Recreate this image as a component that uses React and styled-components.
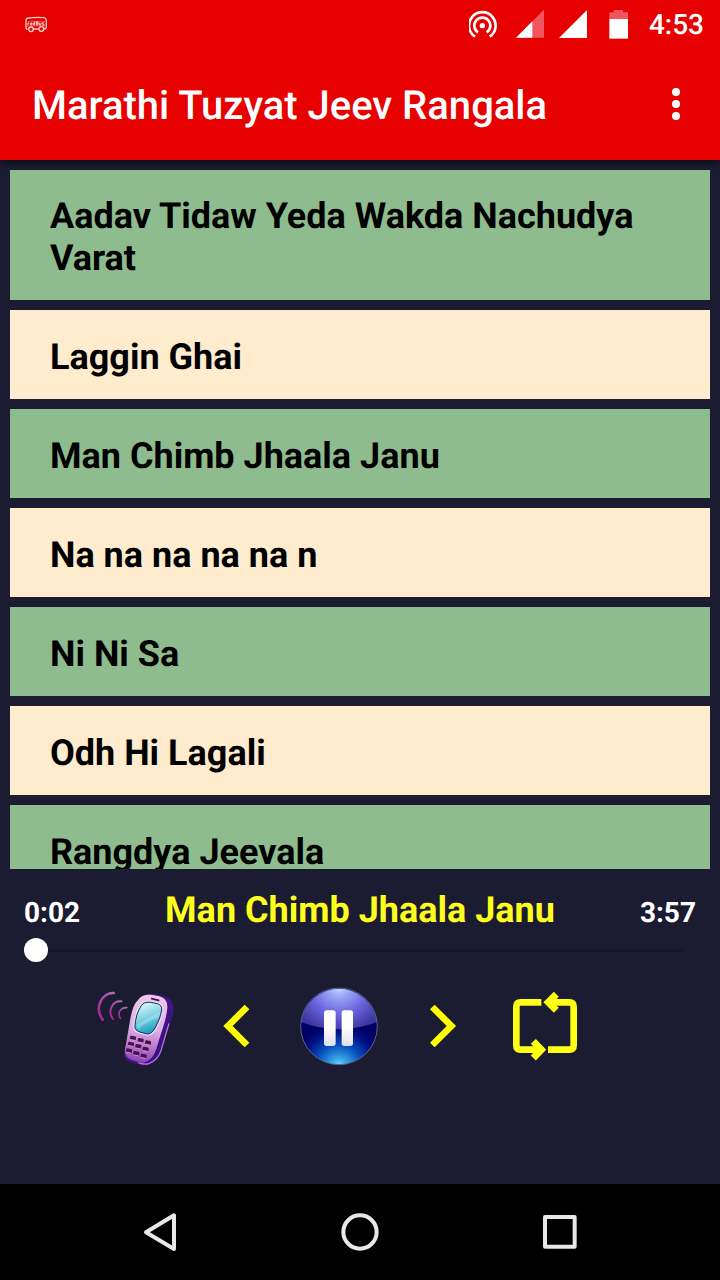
import React, { useState } from "react";
import styled, { createGlobalStyle } from "styled-components";

const GlobalStyle = createGlobalStyle`
  *, *::before, *::after { box-sizing: border-box; }
  body { margin: 0; background: #1b1b31; font-family: Roboto, "Liberation Sans", sans-serif; text-rendering: geometricPrecision; }
  button { margin: 0; padding: 0; border: 0; background: none; font: inherit; text-rendering: inherit; cursor: pointer; }
`;

const Screen = styled.div`
  display: flex;
  flex-direction: column;
  height: 100vh;
  background: #1b1b31;
`;

const Header = styled.header`
  flex: none;
  position: relative;
  background: #e60000;
  color: #fff;
  box-shadow: 0 2px 6px rgba(0, 10, 15, 0.7);
`;

const StatusBar = styled.div`
  display: flex;
  align-items: center;
  justify-content: space-between;
  height: 50px;
  padding: 0 16px 0 24px;
`;

const StatusIcons = styled.div`
  display: flex;
  align-items: center;
  gap: 15px;
`;

const Clock = styled.time`
  font-size: 28px;
  font-weight: 500;
  line-height: 32px;
`;

const AppBar = styled.div`
  display: flex;
  align-items: center;
  justify-content: space-between;
  height: 110px;
  padding: 0 20px 0 32px;
`;

const AppTitle = styled.h1`
  margin: 0;
  padding-top: 2px;
  font-size: 40px;
  font-weight: 500;
  line-height: 48px;
`;

const IconButton = styled.button`
  display: flex;
  align-items: center;
  justify-content: center;
  flex: none;
  width: ${({ $size }) => $size}px;
  height: ${({ $size }) => $size}px;
`;

const Icon = styled.svg`
  display: block;
  flex: none;
  width: ${({ $size }) => $size}px;
  height: ${({ $size }) => $size}px;
`;

const SongList = styled.ul`
  flex: 1;
  min-height: 0;
  display: flex;
  flex-direction: column;
  gap: 10px;
  margin: 0;
  padding: 10px 10px 0;
  list-style: none;
  overflow-y: auto;
  scrollbar-width: none;
`;

const SongItem = styled.li`
  flex: none;
`;

const SongButton = styled.button`
  && {
    display: flex;
    align-items: center;
    width: 100%;
    min-height: 89px;
    padding: 25px 40px 21px;
    background: ${({ $shade }) => ($shade ? "#8fbc8f" : "#ffebcd")};
    color: #000;
    font-size: 36px;
    font-weight: 700;
    line-height: 42px;
    text-align: left;
  }
`;

const Player = styled.section`
  flex: none;
  padding: 20px 24px 118px;
`;

const NowPlaying = styled.div`
  display: flex;
  align-items: baseline;
  justify-content: space-between;
`;

const TrackTime = styled.span`
  color: #fff;
  font-size: 28px;
  font-weight: 700;
  line-height: 42px;
`;

const TrackTitle = styled.h2`
  margin: 0;
  color: #ffff1e;
  font-size: 36px;
  font-weight: 700;
  line-height: 42px;
`;

const SeekBar = styled.input`
  display: block;
  width: 100%;
  height: 24px;
  margin: 4px 0 24px;
  appearance: none;
  background: linear-gradient(#17172a, #17172a) center / calc(100% - 24px) 3px no-repeat;

  &::-webkit-slider-thumb {
    appearance: none;
    width: 24px;
    height: 24px;
    border: 0;
    border-radius: 50%;
    background: #fff;
  }
`;

const Controls = styled.div`
  display: flex;
  justify-content: center;
  gap: 22px;
  padding-right: 40px;
`;

const SystemNav = styled.nav`
  flex: none;
  display: flex;
  align-items: center;
  justify-content: center;
  gap: 160px;
  height: 96px;
  background: #000;
`;

const BusIcon = () => (
  <Icon $size={24} viewBox="72 39 72 72" fill="none" stroke="#ffd0c8" strokeWidth="4" aria-hidden="true">
    <path d="M83 88q-5 0-5-6V61q0-6 7-7 23-3 47-1 6 1 7 7v20q0 7-7 7h-1M101 87h16" />
    <circle cx="93" cy="88" r="7" />
    <circle cx="124" cy="87" r="7" />
    <path d="M80 64h56M80 78h56" strokeWidth="2" opacity=".5" />
    <path d="M84 76v-7h4M91 72h5v-3h-4v6h5M100 75v-6h4v6h-5M104 69v-5M109 65v10h5v-10zM109 70h5M118 68v7h5v-7M132 68h-5v4h5v4h-5" strokeWidth="3" />
  </Icon>
);

const HotspotIcon = () => (
  <Icon $size={30} viewBox="57 30 90 90" fill="none" stroke="#fff" aria-hidden="true">
    <circle cx="97" cy="77" r="8" fill="#fff" stroke="none" />
    <path d="M84 97a24 24 0 1 1 26 0" strokeWidth="8" />
    <path d="M75 110a40 40 0 1 1 44 0" strokeWidth="8" />
  </Icon>
);

const WeakSignalIcon = () => (
  <Icon $size={30} viewBox="192 30 90 90" aria-hidden="true">
    <path d="M282 29v84h-84z" fill="#f3555f" />
    <path d="M247 64v49h-49z" fill="#fff" />
  </Icon>
);

const SignalIcon = () => (
  <Icon $size={30} viewBox="327 30 90 90" aria-hidden="true">
    <path d="M411 30v84h-84z" fill="#fff" />
  </Icon>
);

const BatteryIcon = () => (
  <Icon $size={30} viewBox="462 30 90 90" aria-hidden="true">
    <path d="M478 37h13v-7h28v7h15v21h-56z" fill="#f3555f" />
    <path d="M478 57h56v59h-56z" fill="#fff" />
  </Icon>
);

const MoreIcon = () => (
  <Icon $size={48} viewBox="0 1 48 48" fill="#fff" aria-hidden="true">
    <circle cx="24" cy="12" r="4" />
    <circle cx="24" cy="24" r="4" />
    <circle cx="24" cy="36" r="4" />
  </Icon>
);

const KEYS = [
  [162, 204], [185, 211], [207, 218],
  [156, 222], [178, 229], [200, 237],
  [150, 242], [172, 250], [194, 258],
];

const RingtoneIcon = () => (
  <Icon $size={80} viewBox="51 48 240 240" aria-hidden="true">
    <defs>
      <linearGradient id="caseSide" x1="0" y1="0" x2="1" y2="1">
        <stop offset="0" stopColor="#b987d6" />
        <stop offset=".35" stopColor="#4b1590" />
        <stop offset=".75" stopColor="#38127e" />
        <stop offset="1" stopColor="#b66ae0" />
      </linearGradient>
      <linearGradient id="caseFront" x1=".5" y1="0" x2=".4" y2="1">
        <stop offset="0" stopColor="#f3c7ea" />
        <stop offset=".5" stopColor="#dcaee6" />
        <stop offset=".75" stopColor="#bd78c9" />
        <stop offset="1" stopColor="#8745b5" />
      </linearGradient>
      <linearGradient id="glass" x1=".2" y1="0" x2=".5" y2="1">
        <stop offset="0" stopColor="#e3fbfb" />
        <stop offset=".5" stopColor="#7fd3e4" />
        <stop offset="1" stopColor="#159bc0" />
      </linearGradient>
      <linearGradient id="waves" x1="1" y1="0" x2="0" y2="1">
        <stop offset="0" stopColor="#a970bd" />
        <stop offset="1" stopColor="#a0208c" />
      </linearGradient>
    </defs>
    <g fill="none" stroke="url(#waves)" strokeLinecap="round">
      <path d="M104 69C72 67 43 111 71 149" strokeWidth="8" />
      <path d="M127 94C102 91 83 122 102 147" strokeWidth="6" />
      <path d="M143 113C128 111 112 128 124 145" strokeWidth="5" />
    </g>
    <path d="M180 86Q194 70 226 73L250 78Q281 84 284 112Q284 133 272 163L247 244Q237 276 208 286Q194 289 174 283L149 274Q132 265 137 239Z" fill="url(#caseSide)" />
    <path d="M270 160L246 242Q237 270 209 281Q196 285 178 278" fill="none" stroke="#b576de" strokeWidth="4" />
    <path d="M177 90Q190 72 220 75L241 79Q266 86 265 112Q264 133 255 163L231 239Q221 271 194 278Q183 279 161 271Q135 262 138 238L155 141Q162 104 177 90Z" fill="url(#caseFront)" />
    <path d="M182 103Q192 89 216 92L237 97Q256 103 253 121Q249 147 235 175Q224 196 207 197L184 192Q160 186 162 168Q165 129 182 103Z" fill="#e6d5fa" />
    <path d="M187 107Q194 95 214 97L235 101Q250 106 248 120Q245 143 230 171Q220 191 206 192L186 187Q166 182 168 168Q170 132 187 107Z" fill="url(#glass)" stroke="#15354f" strokeWidth="3" />
    <path d="M173 165Q210 141 245 125L239 144Q208 149 178 176Z" fill="#fff" opacity=".25" />
    <path d="M218 86l21 5" stroke="#3c174b" strokeWidth="5" strokeLinecap="round" />
    {KEYS.map(([x, y]) => (
      <g key={`${x}-${y}`} transform={`translate(${x} ${y}) rotate(10)`}>
        <rect x="-9" y="-6" width="18" height="12" rx="3" fill="#461151" />
        <path d="M-8 6h15" stroke="#f0b3e4" strokeWidth="2" />
      </g>
    ))}
  </Icon>
);

const PreviousIcon = () => (
  <Icon $size={80} viewBox="-6 48 240 240" fill="none" stroke="#ffff00" strokeWidth="20" aria-hidden="true">
    <path d="M141 111L84 168l57 57" />
  </Icon>
);

const NextIcon = () => (
  <Icon $size={80} viewBox="606 48 240 240" fill="none" stroke="#ffff00" strokeWidth="20" aria-hidden="true">
    <path d="M697 111l57 57-57 57" />
  </Icon>
);

const PauseIcon = () => (
  <Icon $size={80} viewBox="300 48 240 240" aria-hidden="true">
    <defs>
      <radialGradient id="orbBase" gradientUnits="userSpaceOnUse" cx="417" cy="292" r="135">
        <stop offset="0" stopColor="#80e6ff" />
        <stop offset=".2" stopColor="#3aa4e8" />
        <stop offset=".5" stopColor="#0650bd" />
        <stop offset=".8" stopColor="#020f83" />
        <stop offset="1" stopColor="#020064" />
      </radialGradient>
      <radialGradient id="orbGloss" gradientUnits="userSpaceOnUse" cx="417" cy="46" r="145">
        <stop offset="0" stopColor="#c2eaff" />
        <stop offset=".25" stopColor="#9ba5f5" />
        <stop offset=".6" stopColor="#6b64df" />
        <stop offset="1" stopColor="#3c36a0" />
      </radialGradient>
      <linearGradient id="pauseBars" x1="0" y1="0" x2="0" y2="1">
        <stop offset="0" stopColor="#fff" />
        <stop offset=".5" stopColor="#fff" />
        <stop offset="1" stopColor="#dedeea" />
      </linearGradient>
    </defs>
    <circle cx="417" cy="169" r="115" fill="url(#orbBase)" />
    <path d="M303 156A115 115 0 0 1 531 156Q417 200 303 156Z" fill="url(#orbGloss)" />
    <circle cx="417" cy="169" r="115" fill="none" stroke="#596587" strokeWidth="3" />
    <rect x="372" y="121" width="35" height="107" rx="8" fill="url(#pauseBars)" />
    <rect x="425" y="121" width="34" height="107" rx="8" fill="url(#pauseBars)" />
  </Icon>
);

const RepeatIcon = () => (
  <Icon $size={80} viewBox="42 48 240 240" fill="none" stroke="#ffff14" strokeWidth="20" aria-hidden="true">
    <path d="M154 97H92Q79 97 79 110V226Q79 239 92 239H140" />
    <path d="M174 239H238Q251 239 251 226V110Q251 97 238 97H184" />
    <path d="M199 73L175 97l24 24" strokeWidth="21" />
    <path d="M130 214l24 25-24 25" strokeWidth="21" />
  </Icon>
);

const BackIcon = () => (
  <Icon $size={40} viewBox="60 66 120 120" fill="none" stroke="#e8e8e8" strokeWidth="12" strokeLinejoin="round" aria-hidden="true">
    <path d="M162 76v101L78 127z" />
  </Icon>
);

const HomeIcon = () => (
  <Icon $size={40} viewBox="660 66 120 120" fill="none" stroke="#e8e8e8" strokeWidth="12" aria-hidden="true">
    <circle cx="720" cy="126" r="50" />
  </Icon>
);

const RecentsIcon = () => (
  <Icon $size={40} viewBox="1260 66 120 120" fill="none" stroke="#e8e8e8" strokeWidth="12" strokeLinejoin="round" aria-hidden="true">
    <rect x="1275" y="81" width="89" height="89" />
  </Icon>
);

const SONGS = [
  "Aadav Tidaw Yeda Wakda Nachudya Varat",
  "Laggin Ghai",
  "Man Chimb Jhaala Janu",
  "Na na na na na n",
  "Ni Ni Sa",
  "Odh Hi Lagali",
  "Rangdya Jeevala",
];

export default function App() {
  const [position, setPosition] = useState(0);

  return (
    <Screen>
      <GlobalStyle />
      <Header>
        <StatusBar>
          <BusIcon />
          <StatusIcons>
            <HotspotIcon />
            <WeakSignalIcon />
            <SignalIcon />
            <BatteryIcon />
            <Clock>4:53</Clock>
          </StatusIcons>
        </StatusBar>
        <AppBar>
          <AppTitle>Marathi Tuzyat Jeev Rangala</AppTitle>
          <IconButton type="button" $size={48} aria-label="More options">
            <MoreIcon />
          </IconButton>
        </AppBar>
      </Header>

      <SongList>
        {SONGS.map((song, index) => (
          <SongItem key={song}>
            <SongButton type="button" $shade={index % 2 === 0}>{song}</SongButton>
          </SongItem>
        ))}
      </SongList>

      <Player aria-label="Player">
        <NowPlaying>
          <TrackTime>0:02</TrackTime>
          <TrackTitle>Man Chimb Jhaala Janu</TrackTitle>
          <TrackTime>3:57</TrackTime>
        </NowPlaying>
        <SeekBar
          type="range"
          min="0"
          max="237"
          value={position}
          onChange={(event) => setPosition(Number(event.target.value))}
          aria-label="Seek"
        />
        <Controls>
          <IconButton type="button" $size={80} aria-label="Set as ringtone"><RingtoneIcon /></IconButton>
          <IconButton type="button" $size={80} aria-label="Previous"><PreviousIcon /></IconButton>
          <IconButton type="button" $size={80} aria-label="Pause"><PauseIcon /></IconButton>
          <IconButton type="button" $size={80} aria-label="Next"><NextIcon /></IconButton>
          <IconButton type="button" $size={80} aria-label="Repeat"><RepeatIcon /></IconButton>
        </Controls>
      </Player>

      <SystemNav aria-label="System">
        <IconButton type="button" $size={40} aria-label="Back"><BackIcon /></IconButton>
        <IconButton type="button" $size={40} aria-label="Home"><HomeIcon /></IconButton>
        <IconButton type="button" $size={40} aria-label="Recent apps"><RecentsIcon /></IconButton>
      </SystemNav>
    </Screen>
  );
}
